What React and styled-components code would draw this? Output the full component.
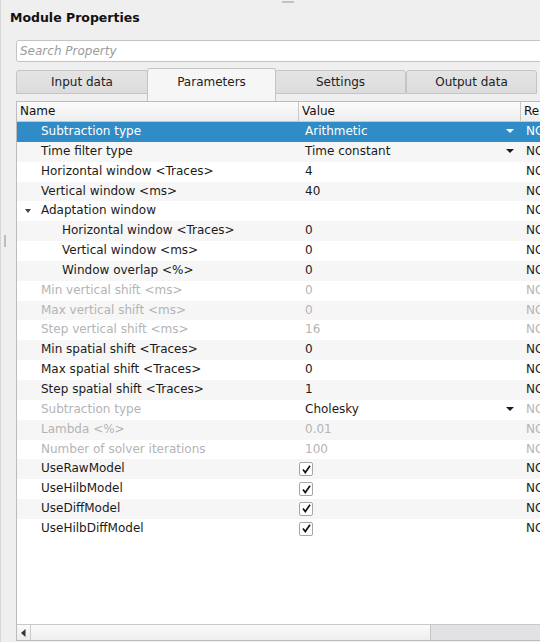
import React from 'react';
import styled, { createGlobalStyle } from 'styled-components';

const GlobalStyle = createGlobalStyle`
body {
  margin: 0;
  background: #efefef;
  font-family: "DejaVu Sans", "Liberation Sans", sans-serif;
  font-size: 12px;
  color: #1b1b1b;
  overflow: hidden;
}`

const rows = [
    { name: 'Subtraction type', value: 'Arithmetic', combo: true, selected: true },
    { name: 'Time filter type', value: 'Time constant', combo: true },
    { name: 'Horizontal window <Traces>', value: '4' },
    { name: 'Vertical window <ms>', value: '40' },
    { name: 'Adaptation window', value: '', group: true },
    { name: 'Horizontal window <Traces>', value: '0', level: 1 },
    { name: 'Vertical window <ms>', value: '0', level: 1 },
    { name: 'Window overlap <%>', value: '0', level: 1 },
    { name: 'Min vertical shift <ms>', value: '0', disabled: true },
    { name: 'Max vertical shift <ms>', value: '0', disabled: true },
    { name: 'Step vertical shift <ms>', value: '16', disabled: true },
    { name: 'Min spatial shift <Traces>', value: '0' },
    { name: 'Max spatial shift <Traces>', value: '0' },
    { name: 'Step spatial shift <Traces>', value: '1' },
    { name: 'Subtraction type', value: 'Cholesky', combo: true, disabled: true, comboActive: true },
    { name: 'Lambda <%>', value: '0.01', disabled: true },
    { name: 'Number of solver iterations', value: '100', disabled: true },
    { name: 'UseRawModel', check: true },
    { name: 'UseHilbModel', check: true },
    { name: 'UseDiffModel', check: true },
    { name: 'UseHilbDiffModel', check: true },
];

const tabs = ['Input data', 'Parameters', 'Settings', 'Output data'];

function App() {
    return (
        <>
            <GlobalStyle />
            <Window>
                <TopHandle />
                <SideHandle />
                <Title>Module Properties</Title>
                <Search placeholder="Search Property" />
                <Tabs>
                    {tabs.map((t, i) =>
                        <Tab key={t} active={i === 1} first={i === 0}>{t}</Tab>)}
                </Tabs>
                <Table>
                    <HeadRow>
                        <HeadCell w={282}>Name</HeadCell>
                        <HeadCell w={222}>Value</HeadCell>
                        <HeadCell w={80}>Re</HeadCell>
                    </HeadRow>
                    <Body>
                        {rows.map((r, i) =>
                            <Row key={i} selected={r.selected} alt={i % 2 === 1}>
                                <NameCell level={r.level || 0} disabled={r.disabled}>
                                    {r.group && <Expander />}
                                    {r.name}
                                </NameCell>
                                <ValueCell disabled={r.disabled && !r.comboActive}>
                                    {r.check
                                        ? <CheckBox>
                                            <svg width="11" height="11" viewBox="0 0 11 11">
                                                <path d="M2 5.6 L4.3 8.6 L9 1.8" fill="none" stroke="#111" strokeWidth="1.7" />
                                            </svg>
                                        </CheckBox>
                                        : <span>{r.value}</span>}
                                    {r.combo && <ComboArrow selected={r.selected} />}
                                </ValueCell>
                                <ReCell disabled={r.disabled}>NO</ReCell>
                            </Row>)}
                    </Body>
                    <ScrollBar>
                        <ScrollButton>
                            <svg width="5" height="8" viewBox="0 0 5 8"><path d="M4.5 0 L0 4 L4.5 8 Z" fill="#333" /></svg>
                        </ScrollButton>
                        <ScrollHandle />
                        <ScrollTrack />
                    </ScrollBar>
                </Table>
            </Window>
        </>
    );
}

export default App;

const Window = styled.div`
position: relative;
width: 540px;
height: 642px;
overflow: hidden;
display: flex;
flex-direction: column;
background: #efefef;
border-left: 1px solid #d6d6d6;
box-sizing: border-box;`

const TopHandle = styled.div`
position: absolute;
top: 1px;
left: 281px;
width: 12px;
height: 2px;
background-image: radial-gradient(circle, #c2c2c2 0.8px, transparent 1px);
background-size: 2px 2px;`

const SideHandle = styled.div`
position: absolute;
left: 3px;
top: 235px;
width: 2px;
height: 12px;
background-image: radial-gradient(circle, #bdbdbd 0.8px, transparent 1px);
background-size: 2px 2px;`

const Title = styled.div`
height: 36px;
line-height: 36px;
padding-left: 9px;
font-weight: bold;
font-size: 12.5px;
color: #111;`

const Search = styled.input`
margin: 4px 0 0 15px;
width: 580px;
height: 22px;
box-sizing: border-box;
border: 1px solid #c3c3c3;
border-radius: 3px;
background: #fff;
padding: 0 3px;
font-family: inherit;
font-size: 12px;
outline: none;
&::placeholder {
  color: #9c9c9c;
  font-style: italic;
}`

const Tabs = styled.div`
display: flex;
align-items: flex-start;
margin: 6px 0 0 15px;
height: 34px;`

const Tab = styled.div`
box-sizing: border-box;
width: ${p => p.active ? 129 : p.first ? 132 : 131}px;
height: ${p => p.active ? 34 : 24}px;
margin-top: ${p => p.active ? 0 : 2}px;
line-height: ${p => p.active ? 26 : 22}px;
text-align: center;
border: 1px solid #c4c4c4;
border-bottom: ${p => p.active ? 'none' : '1px solid #c4c4c4'};
border-radius: 3px 3px 0 0;
background: ${p => p.active ? '#f6f6f6' : 'linear-gradient(#e4e4e4, #dcdcdc)'};
color: #222;
z-index: ${p => p.active ? 1 : 0};
margin-right: ${p => p.active ? -1 : 0}px;
margin-left: ${p => p.active ? -1 : 0}px;`

const Table = styled.div`
flex: 1;
margin: -1px 0 1px 15px;
width: 620px;
border: 1px solid #bcbcbc;
background: #fff;
display: flex;
flex-direction: column;
position: relative;
z-index: 2;`

const HeadRow = styled.div`
display: flex;
height: 19px;
border-bottom: 1px solid #c8c8c8;
background: linear-gradient(#fbfbfb, #eeeeee);`

const HeadCell = styled.div`
width: ${p => p.w}px;
box-sizing: border-box;
padding-left: 3px;
line-height: 19px;
border-right: 1px solid #c8c8c8;
color: #111;`

const Body = styled.div`
flex: 1;`

const Row = styled.div`
display: flex;
height: 19.85px;
line-height: 19.85px;
background: ${p => p.selected ? '#308cc6' : p.alt ? '#f6f6f6' : '#fff'};
color: ${p => p.selected ? '#fff' : 'inherit'};`

const NameCell = styled.div`
position: relative;
width: 282px;
box-sizing: border-box;
padding-left: ${p => 24 + p.level * 21}px;
white-space: nowrap;
color: ${p => p.disabled ? '#b4b4b4' : 'inherit'};`

const Expander = styled.span`
position: absolute;
left: 8px;
top: 8px;
border-left: 3.5px solid transparent;
border-right: 3.5px solid transparent;
border-top: 4px solid #444;`

const ValueCell = styled.div`
position: relative;
width: 222px;
box-sizing: border-box;
padding-left: 6px;
display: flex;
align-items: center;
white-space: nowrap;
color: ${p => p.disabled ? '#b4b4b4' : 'inherit'};`

const ComboArrow = styled.span`
position: absolute;
right: 7px;
top: 7px;
border-left: 4px solid transparent;
border-right: 4px solid transparent;
border-top: 4px solid ${p => p.selected ? '#fff' : '#1a1a1a'};`

const CheckBox = styled.span`
box-sizing: border-box;
width: 14px;
height: 14px;
margin-left: -6px;
border: 1px solid #a6a6a6;
border-radius: 2px;
background: #fff;
display: flex;
align-items: center;
justify-content: center;`

const ReCell = styled.div`
padding-left: 5px;
color: ${p => p.disabled ? '#b4b4b4' : 'inherit'};`

const ScrollBar = styled.div`
display: flex;
height: 15px;
border-top: 1px solid #c8c8c8;
background: #e2e1e3;`

const ScrollButton = styled.div`
width: 13px;
display: flex;
align-items: center;
justify-content: center;
background: linear-gradient(#fafafa, #ececec);
border-right: 1px solid #cbcbcb;`

const ScrollHandle = styled.div`
width: 400px;
box-sizing: border-box;
background: linear-gradient(#fafafa, #eeeeee);
border-right: 1px solid #c4c4c4;`

const ScrollTrack = styled.div`
flex: 1;`
